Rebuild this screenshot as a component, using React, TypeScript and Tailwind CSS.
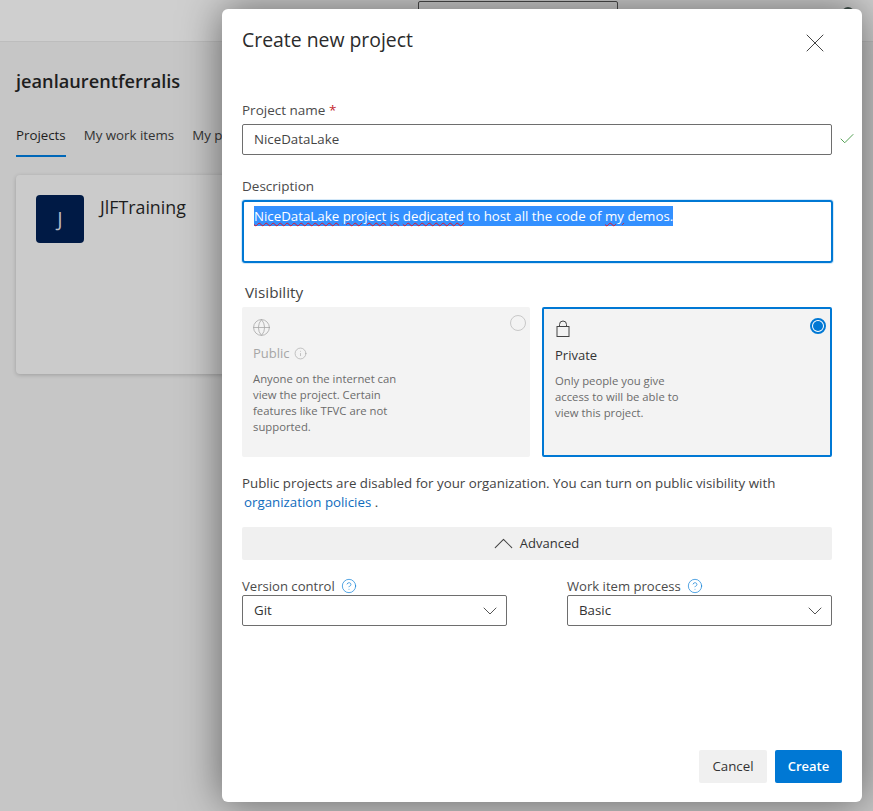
import { ChevronDown, ChevronUp, Check, Globe, Info, CircleHelp, X } from 'lucide-react'

function HelpLabel({ text }: { text: string }) {
  return (
    <div className="mt-px flex items-center gap-[6px] h-[20px] text-[13.1px] text-[#4b4b4b]">
      <span>{text}</span>
      <CircleHelp className="h-[16px] w-[16px] -mt-[3px] text-[#0078d4]" strokeWidth={1} />
    </div>
  )
}

function Select({ value }: { value: string }) {
  return (
    <div className="-mt-[2px] flex h-[31px] items-center justify-between rounded-[2px] border border-[#6e6e6e] pl-[11px] pr-[4px] text-[13.3px] text-[#333]">
      <span className="pt-px">{value}</span>
      <ChevronDown className="h-[24px] w-[24px] text-[#555]" strokeWidth={1} />
    </div>
  )
}

function LockIcon() {
  return (
    <svg width="14" height="17" viewBox="0 0 14 17" fill="none" stroke="#444" strokeWidth="1" className="ml-[1px]">
      <rect x="1" y="6.5" width="12" height="10" />
      <path d="M3.5 6.5V4.5a3.5 3.5 0 0 1 7 0v2" />
    </svg>
  )
}

const squiggle = 'underline decoration-wavy decoration-[#e81123] decoration-1 underline-offset-1'

export default function App() {
  return (
    <div className="relative h-[811px] w-full overflow-hidden bg-[#c8c8c8] text-[#1e1e1e] [font-family:'Open_Sans',sans-serif]">
      {/* page behind the dialog */}
      <header className="relative h-[42px] border-b border-[#bdbdbd] bg-[#cfcfcf]">
        <div className="absolute left-[418px] top-px h-[20px] w-[200px] rounded-t-[2px] border border-[#4a4a4a]" />
        <div className="absolute left-[842px] top-[7px] h-[12px] w-[12px] rounded-full bg-[#3f4f4a]" />
      </header>
      <main className="bg-[#c6c6c6] px-4 h-full">
        <h1 className="pt-[26px] text-[18.2px] font-semibold leading-[26px]">jeanlaurentferralis</h1>
        <nav className="mt-[32px] flex w-[206px] gap-[18px] overflow-hidden whitespace-nowrap text-[13.3px] text-[#333]">
          <span className="border-b-2 border-[#0067b8] pb-[9px] font-medium text-[#1e1e1e]">Projects</span>
          <span>My work items</span>
          <span>My pull requests</span>
        </nav>
        <div className="mt-[18px] h-[199px] w-[400px] rounded-[4px] bg-[#cbcbcb] p-5 shadow-[0_1px_4px_rgba(0,0,0,0.2)]">
          <div className="flex gap-4">
            <div className="flex h-[48px] w-[48px] items-center justify-center rounded-[4px] bg-[#001a45] text-[20px] text-[#b9bcc4]">J</div>
            <span className="text-[17.8px] font-medium leading-[24px]">JlFTraining</span>
          </div>
        </div>
      </main>

      {/* dialog */}
      <div className="absolute left-[222px] top-[9px] flex h-[793px] w-[640px] flex-col rounded-[6px] bg-white px-5 shadow-[0_0_40px_rgba(0,0,0,0.5)]">
        <div className="flex items-start justify-between pt-[16px]">
          <h2 className="text-[19.4px] font-medium leading-[30px] text-[#2b2b2b]">Create new project</h2>
          <X className="mr-[11px] mt-[2px] h-[32px] w-[32px] text-[#444]" strokeWidth={0.75} />
        </div>

        <label className="mt-[41px] h-[20px] text-[13.5px] leading-[20px] text-[#4b4b4b]">
          Project name <span className="text-[#c4262e]">*</span>
        </label>
        <div className="relative mt-[4px]">
          <div className="flex h-[31px] w-[590px] items-center rounded-[2px] border border-[#6e6e6e] pl-[11px] pt-px text-[13.3px] text-[#444]">NiceDataLake</div>
          <Check className="absolute left-[596px] top-[6px] h-[18px] w-[18px] text-[#4f9e4f]" strokeWidth={1.3} />
        </div>

        <label className="mt-[21px] h-[20px] text-[13.5px] leading-[20px] text-[#4b4b4b]">Description</label>
        <div className="mt-[4px] h-[63px] w-[591px] rounded-[3px] border-2 border-[#0078d4] pl-[10px] pt-[5px] text-[13.3px] leading-[19px] shadow-[0_0_0_1px_#d6e9f8]">
          <span className="bg-[#3390ff] py-[1px] text-white">
            <span className={squiggle}>NiceDataLake</span> <span className={squiggle}>project</span> <span className={squiggle}>is</span>{' '}
            <span className={squiggle}>dedicated</span> to host all the code of <span className={squiggle}>my</span> demos.
          </span>
        </div>

        <div className="ml-[3px] mt-[17px] h-[24px] text-[15.3px] leading-[24px] text-[#444]">Visibility</div>
        <div className="mt-[3px] grid w-[590px] grid-cols-[288px_290px] gap-3">
          <div className="relative h-[150px] rounded-[2px] bg-[#f3f3f3] px-[10px] pt-[11px]">
            <Globe className="h-[19px] w-[19px] text-[#a6a6a6]" strokeWidth={1} />
            <div className="ml-px mt-[6px] flex items-center gap-[4px] text-[13px] leading-[20px] text-[#a6a6a6]">
              Public <Info className="h-[13px] w-[13px]" strokeWidth={1.2} />
            </div>
            <p className="ml-px mt-[8px] w-[155px] text-[11.3px] leading-[16px] text-[#6b6b6b]">
              Anyone on the internet can view the project. Certain features like TFVC are not supported.
            </p>
            <div className="absolute right-[4px] top-[8px] h-[16px] w-[16px] rounded-full border border-[#c8c8c8]" />
          </div>
          <div className="relative h-[150px] rounded-[2px] border-2 border-[#0078d4] bg-[#f3f3f3] px-[11px] pt-[11px]">
            <LockIcon />
            <div className="mt-[8px] text-[13px] leading-[20px] text-[#333]">Private</div>
            <p className="mt-[8px] w-[135px] text-[11.3px] leading-[16px] text-[#6b6b6b]">
              Only people you give access to will be able to view this project.
            </p>
            <div className="absolute right-[4px] top-[9px] flex h-[16px] w-[16px] items-center justify-center rounded-full border-2 border-[#0078d4] bg-white">
              <div className="h-[10px] w-[10px] rounded-full bg-[#0078d4]" />
            </div>
          </div>
        </div>

        <p className="mt-[17px] w-[590px] text-[13.3px] leading-[19px] text-[#444]">
          Public projects are disabled for your organization. You can turn on public visibility with
          <br />
          <span className="ml-[2px] text-[#0f6cbd]">organization policies</span> .
        </p>

        <div className="mt-[15px] flex h-[33px] w-[590px] items-center justify-center rounded-[2px] bg-[#f0f0f0] pr-[8px] text-[13px] font-medium text-[#333]">
          <ChevronUp className="h-[33px] w-[33px] text-[#444]" strokeWidth={0.75} />
          <span className="pt-px">Advanced</span>
        </div>

        <div className="mt-[16px] grid w-[590px] grid-cols-[265px_265px] gap-[60px]">
          <div>
            <HelpLabel text="Version control" />
            <Select value="Git" />
          </div>
          <div>
            <HelpLabel text="Work item process" />
            <Select value="Basic" />
          </div>
        </div>

        <div className="mt-auto mb-[19px] flex justify-end gap-2">
          <button className="h-[33px] w-[68px] rounded-[2px] bg-[#f0f0f0] pt-px text-[13.3px] font-medium text-[#333]">Cancel</button>
          <button className="h-[33px] w-[67px] rounded-[2px] bg-[#0078d4] pt-px text-[13px] font-semibold text-white">Create</button>
        </div>
      </div>
    </div>
  )
}
